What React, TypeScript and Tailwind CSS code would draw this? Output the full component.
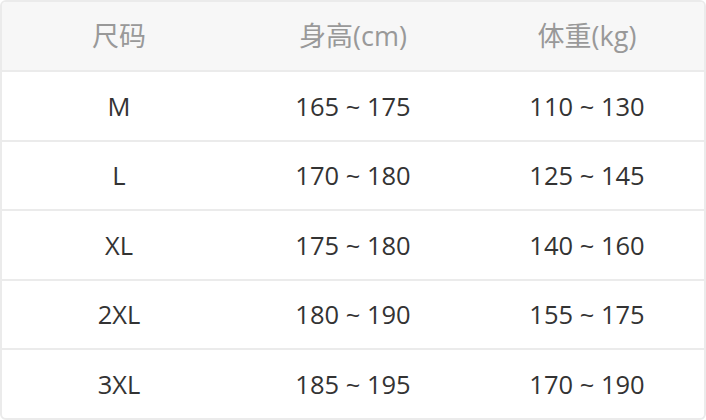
import React from "react";

const rows = [
  ["M", "165 ~ 175", "110 ~ 130"],
  ["L", "170 ~ 180", "125 ~ 145"],
  ["XL", "175 ~ 180", "140 ~ 160"],
  ["2XL", "180 ~ 190", "155 ~ 175"],
  ["3XL", "185 ~ 195", "170 ~ 190"],
];

export default function App() {
  return (
    <div
      className="w-[706px] h-[420px] bg-white"
      style={{ fontFamily: '"Open Sans", "Noto Sans CJK SC", sans-serif' }}
    >
      <div className="h-full border-2 border-[#ebebeb] rounded-[6px] overflow-hidden flex flex-col">
        <div className="grid grid-cols-3 h-[68px] bg-[#f7f7f7] text-[#999999] text-[27px] items-center text-center">
          <div>尺码</div>
          <div>身高(cm)</div>
          <div>体重(kg)</div>
        </div>
        {rows.map((r, i) => (
          <div
            key={i}
            className="grid grid-cols-3 flex-1 border-t-2 border-[#ebebeb] text-[#333333] text-[25.5px] items-center text-center"
          >
            <div>{r[0]}</div>
            <div>{r[1]}</div>
            <div>{r[2]}</div>
          </div>
        ))}
      </div>
    </div>
  );
}
